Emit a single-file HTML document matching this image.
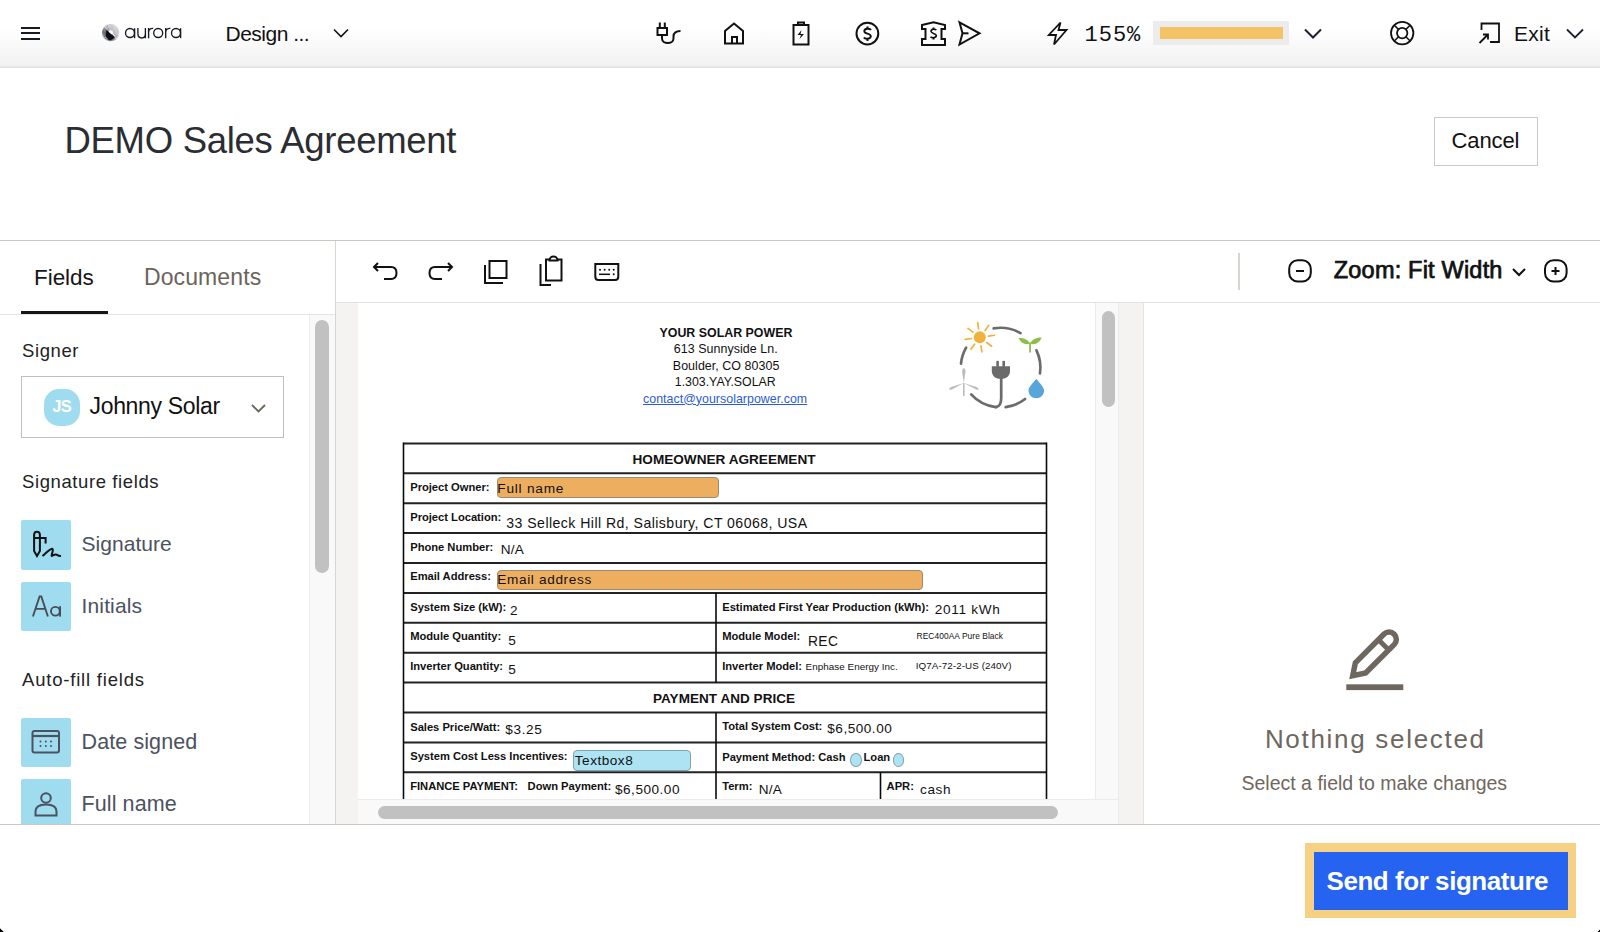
<!DOCTYPE html>
<html><head><meta charset="utf-8"><title>DEMO Sales Agreement</title>
<style>
html,body{margin:0;padding:0;}
body{width:1600px;height:932px;overflow:hidden;position:relative;background:#fff;font-family:"Liberation Sans",sans-serif;}
.t{position:absolute;white-space:nowrap;}
.r{position:absolute;}
.s{position:absolute;overflow:visible;}
</style></head><body>
<div class="r" style="left:0;top:0;width:1600px;height:66px;background:linear-gradient(#ffffff 0%,#ffffff 40%,#fbfbfb 60%,#f1f1f1 100%);"></div>
<div class="r" style="left:0px;top:66px;width:1600px;height:1px;background:#e8e9e9;"></div>
<div class="r" style="left:0px;top:67px;width:1600px;height:1px;background:#dfe1e1;"></div>
<div class="r" style="left:20.5px;top:26.6px;width:19.5px;height:2.1px;background:#161a22;"></div>
<div class="r" style="left:20.5px;top:32.4px;width:19.5px;height:2.1px;background:#161a22;"></div>
<div class="r" style="left:20.5px;top:38.3px;width:19.5px;height:2.1px;background:#161a22;"></div>
<svg class="s" width="1600" height="70" style="left:0;top:0"><g stroke-width="0.75"><line x1="113.10" y1="32.60" x2="119.20" y2="32.60" stroke="#b5b7bc"/><line x1="113.07" y1="32.96" x2="119.11" y2="33.82" stroke="#b5b7bc"/><line x1="113.00" y1="33.30" x2="118.85" y2="35.02" stroke="#b5b7bc"/><line x1="112.87" y1="33.64" x2="118.42" y2="36.17" stroke="#8a8d94"/><line x1="112.70" y1="33.95" x2="117.83" y2="37.25" stroke="#8a8d94"/><line x1="112.49" y1="34.24" x2="117.10" y2="38.23" stroke="#8a8d94"/><line x1="112.24" y1="34.49" x2="116.23" y2="39.10" stroke="#8a8d94"/><line x1="111.95" y1="34.70" x2="115.25" y2="39.83" stroke="#3a3d45"/><line x1="111.64" y1="34.87" x2="114.17" y2="40.42" stroke="#3a3d45"/><line x1="111.30" y1="35.00" x2="113.02" y2="40.85" stroke="#3a3d45"/><line x1="110.96" y1="35.07" x2="111.82" y2="41.11" stroke="#3a3d45"/><line x1="110.60" y1="35.10" x2="110.60" y2="41.20" stroke="#3a3d45"/><line x1="110.24" y1="35.07" x2="109.38" y2="41.11" stroke="#3a3d45"/><line x1="109.90" y1="35.00" x2="108.18" y2="40.85" stroke="#3a3d45"/><line x1="109.56" y1="34.87" x2="107.03" y2="40.42" stroke="#3a3d45"/><line x1="109.25" y1="34.70" x2="105.95" y2="39.83" stroke="#3a3d45"/><line x1="108.96" y1="34.49" x2="104.97" y2="39.10" stroke="#3a3d45"/><line x1="108.71" y1="34.24" x2="104.10" y2="38.23" stroke="#3a3d45"/><line x1="108.50" y1="33.95" x2="103.37" y2="37.25" stroke="#3a3d45"/><line x1="108.33" y1="33.64" x2="102.78" y2="36.17" stroke="#3a3d45"/><line x1="108.20" y1="33.30" x2="102.35" y2="35.02" stroke="#3a3d45"/><line x1="108.13" y1="32.96" x2="102.09" y2="33.82" stroke="#3a3d45"/><line x1="108.10" y1="32.60" x2="102.00" y2="32.60" stroke="#3a3d45"/><line x1="108.13" y1="32.24" x2="102.09" y2="31.38" stroke="#3a3d45"/><line x1="108.20" y1="31.90" x2="102.35" y2="30.18" stroke="#3a3d45"/><line x1="108.33" y1="31.56" x2="102.78" y2="29.03" stroke="#3a3d45"/><line x1="108.50" y1="31.25" x2="103.37" y2="27.95" stroke="#3a3d45"/><line x1="108.71" y1="30.96" x2="104.10" y2="26.97" stroke="#8a8d94"/><line x1="108.96" y1="30.71" x2="104.97" y2="26.10" stroke="#8a8d94"/><line x1="109.25" y1="30.50" x2="105.95" y2="25.37" stroke="#8a8d94"/><line x1="109.56" y1="30.33" x2="107.03" y2="24.78" stroke="#8a8d94"/><line x1="109.90" y1="30.20" x2="108.18" y2="24.35" stroke="#b5b7bc"/><line x1="110.24" y1="30.13" x2="109.38" y2="24.09" stroke="#b5b7bc"/><line x1="110.60" y1="30.10" x2="110.60" y2="24.00" stroke="#b5b7bc"/><line x1="110.96" y1="30.13" x2="111.82" y2="24.09" stroke="#b5b7bc"/><line x1="111.30" y1="30.20" x2="113.02" y2="24.35" stroke="#b5b7bc"/><line x1="111.64" y1="30.33" x2="114.17" y2="24.78" stroke="#b5b7bc"/><line x1="111.95" y1="30.50" x2="115.25" y2="25.37" stroke="#b5b7bc"/><line x1="112.24" y1="30.71" x2="116.23" y2="26.10" stroke="#b5b7bc"/><line x1="112.49" y1="30.96" x2="117.10" y2="26.97" stroke="#b5b7bc"/><line x1="112.70" y1="31.25" x2="117.83" y2="27.95" stroke="#b5b7bc"/><line x1="112.87" y1="31.56" x2="118.42" y2="29.03" stroke="#b5b7bc"/><line x1="113.00" y1="31.90" x2="118.85" y2="30.18" stroke="#b5b7bc"/><line x1="113.07" y1="32.24" x2="119.11" y2="31.38" stroke="#b5b7bc"/></g><path d="M106.5 30 L114.8 37.2 C113 39.5 110.5 40.2 108.8 40 L105.5 36 Z" fill="#0e111a"/><line x1="110" y1="30.2" x2="114.8" y2="36" stroke="#fff" stroke-width="1"/></svg>
<svg class="s" width="200" height="60" style="left:0;top:0" fill="none" stroke="#161a22" stroke-width="1.35"><circle cx="130" cy="33" r="4.5"/><line x1="134.6" y1="28.2" x2="134.6" y2="38.2"/><path d="M137.9 28 V33.5 C137.9 36.3 139.6 38 141.9 38 C144.2 38 145.4 36.3 145.4 33.5 V28 M145.4 33 V38.2"/><path d="M148.6 38.2 V28 M148.6 32.5 C148.6 29.5 150.5 28.2 153.2 28.4"/><circle cx="158.2" cy="33" r="4.5"/><path d="M165.7 38.2 V28 M165.7 32.5 C165.7 29.5 167.6 28.2 170.4 28.4"/><circle cx="176" cy="33" r="4.5"/><line x1="180.6" y1="28.2" x2="180.6" y2="38.2"/></svg>
<div class="t" style="left:225.50px;top:22.92px;font-size:21px;line-height:21px;font-weight:400;color:#111;letter-spacing:-0.5px;font-family:'Liberation Sans',sans-serif;">Design ...</div>
<svg class="s" width="1600" height="70" style="left:0;top:0" fill="none" stroke="#111" stroke-width="2"><polyline points="334,29.5 341,36.5 348,29.5" stroke-width="1.6"/><rect x="657.5" y="28" width="9.5" height="7"/><line x1="659.8" y1="22.5" x2="659.8" y2="28"/><line x1="664.8" y1="22.5" x2="664.8" y2="28"/><path d="M662 35 V38.5 C662 44.5 673.5 44.5 673.5 38.5 V36.5 C673.5 32.5 676 31 680.5 31"/><path d="M725 43.5 V31 L734 23.5 L743 31 V43.5 Z"/><path d="M732 43.5 V37 H737 V43.5"/><rect x="793.5" y="25" width="15" height="19.5"/><path d="M798 25 V22.5 H804 V25"/><path d="M801.5 30 L797.5 35 H801 L799.5 39 L804 34 H800.5 Z" fill="#111" stroke="none"/><circle cx="867.4" cy="33.6" r="10.9"/><path d="M871 30 C870 28.3 864.3 28 864.3 31.2 C864.3 34.2 870.8 33.2 870.8 36.3 C870.8 39.3 865 39.2 863.8 37.5" stroke-width="1.9"/><line x1="867.5" y1="26.5" x2="867.5" y2="29"/><line x1="867.5" y1="38.5" x2="867.5" y2="41"/><path d="M922 25 L933.5 22.3 L945 25 V29 H941.5 V39 H945 V45 H922 V39 H925.5 V29 H922 Z"/><path d="M936.3 30.2 C935.5 28.8 931 28.6 931 31.3 C931 33.8 936.3 33 936.3 35.6 C936.3 38.2 931.6 38.1 930.5 36.7" stroke-width="1.6"/><line x1="933.5" y1="27.5" x2="933.5" y2="29"/><line x1="933.5" y1="38" x2="933.5" y2="39.5"/><path d="M959.5 22.3 L979.5 33.3 L959.5 44.5 L962.5 33.3 Z" stroke-linejoin="miter"/><line x1="962.5" y1="33.3" x2="968.5" y2="33.3"/><path d="M1060.5 22.5 L1048.8 35 H1056 L1054 44.5 L1066.5 30 H1058.5 Z" stroke-width="1.8" stroke-linejoin="miter"/><polyline points="1305,29.5 1313,37.5 1321,29.5" stroke="#1c2230"/><circle cx="1402.2" cy="33.1" r="11.2" stroke-width="1.8"/><circle cx="1402.2" cy="33.1" r="5.2" stroke-width="1.8"/><path d="M1394.3 25.2 L1398.5 29.4 M1410.1 25.2 L1405.9 29.4 M1394.3 41 L1398.5 36.8 M1410.1 41 L1405.9 36.8" stroke-width="1.5"/><path d="M1481.5 30 V23.5 H1499 V42 H1490" stroke-width="1.8"/><path d="M1479.5 43 L1488 34.5 M1483 34.5 H1488 V39.5" stroke-width="1.8"/><polyline points="1567,29.5 1575,37.5 1583,29.5" stroke="#1c2230" stroke-width="1.8"/></svg>
<div class="t" style="left:1084.50px;top:24.75px;font-size:22px;line-height:22px;font-weight:400;color:#111;letter-spacing:1.0px;font-family:'Liberation Mono',monospace;">155%</div>
<div class="r" style="left:1153px;top:21px;width:136px;height:24px;background:#ececec;"></div>
<div class="r" style="left:1160px;top:27px;width:123px;height:12px;background:#f3c366;"></div>
<div class="t" style="left:1514.00px;top:23.12px;font-size:21px;line-height:21px;font-weight:400;color:#111;letter-spacing:0.25px;font-family:'Liberation Sans',sans-serif;">Exit</div>
<div class="t" style="left:64.50px;top:122.85px;font-size:36.5px;line-height:36.5px;font-weight:400;color:#2a2d32;letter-spacing:-0.3px;font-family:'Liberation Sans',sans-serif;">DEMO Sales Agreement</div>
<div class="r" style="left:1434px;top:117px;width:102px;height:47px;border:1px solid #c9cccf;background:#fff"></div>
<div class="t" style="left:1451.50px;top:129.98px;font-size:22px;line-height:22px;font-weight:400;color:#111;letter-spacing:-0.1px;font-family:'Liberation Sans',sans-serif;">Cancel</div>
<div class="r" style="left:0px;top:240px;width:1600px;height:1px;background:#cdc8c2;"></div>
<div class="r" style="left:335px;top:241px;width:1px;height:583px;background:#d9d6d2;"></div>
<div class="t" style="left:34.00px;top:266.75px;font-size:22.5px;line-height:22.5px;font-weight:400;color:#161616;letter-spacing:-0.05px;font-family:'Liberation Sans',sans-serif;">Fields</div>
<div class="t" style="left:144.00px;top:266.13px;font-size:23px;line-height:23px;font-weight:400;color:#6b645c;letter-spacing:0.1px;font-family:'Liberation Sans',sans-serif;">Documents</div>
<div class="r" style="left:0px;top:314px;width:335px;height:1px;background:#e6e4e1;"></div>
<div class="r" style="left:21px;top:311px;width:87px;height:3px;background:#161616;"></div>
<div class="r" style="left:309px;top:315px;width:26px;height:509px;background:#f9f9f9;border-left:1px solid #ebebeb;box-sizing:border-box"></div>
<div class="r" style="left:315px;top:320px;width:14px;height:253px;background:#c1c1c1;border-radius:7px"></div>
<div class="t" style="left:22.00px;top:342.09px;font-size:18.5px;line-height:18.5px;font-weight:400;color:#222;letter-spacing:0.6px;font-family:'Liberation Sans',sans-serif;">Signer</div>
<div class="r" style="left:21px;top:376px;width:263px;height:62px;border:1px solid #bcc0c4;box-sizing:border-box;background:#fff"></div>
<div class="r" style="left:44px;top:389px;width:36px;height:37px;background:#9fdcef;border-radius:15px"></div>
<div class="t" style="left:52.30px;top:398.33px;font-size:16.5px;line-height:16.5px;font-weight:700;color:#fff;letter-spacing:-0.7px;font-family:'Liberation Sans',sans-serif;">JS</div>
<div class="t" style="left:89.50px;top:395.13px;font-size:23px;line-height:23px;font-weight:400;color:#111;letter-spacing:-0.32px;font-family:'Liberation Sans',sans-serif;">Johnny Solar</div>
<svg class="s" width="300" height="450" style="left:0;top:0" fill="none"><polyline points="252,405 258.5,411.5 265,405" stroke="#6b645b" stroke-width="1.8"/></svg>
<div class="t" style="left:22.00px;top:473.04px;font-size:18.5px;line-height:18.5px;font-weight:400;color:#222;letter-spacing:0.6px;font-family:'Liberation Sans',sans-serif;">Signature fields</div>
<div class="r" style="left:21px;top:520px;width:50px;height:50px;background:#9fdcef;border-radius:2px"></div>
<div class="t" style="left:81.50px;top:533.32px;font-size:21px;line-height:21px;font-weight:400;color:#4b5260;letter-spacing:0.05px;font-family:'Liberation Sans',sans-serif;">Signature</div>
<div class="r" style="left:21px;top:582px;width:50px;height:49px;background:#9fdcef;border-radius:2px"></div>
<div class="t" style="left:81.50px;top:594.92px;font-size:21px;line-height:21px;font-weight:400;color:#4b5260;letter-spacing:0.15px;font-family:'Liberation Sans',sans-serif;">Initials</div>
<div class="t" style="left:22.00px;top:670.84px;font-size:18.5px;line-height:18.5px;font-weight:400;color:#222;letter-spacing:0.8px;font-family:'Liberation Sans',sans-serif;">Auto-fill fields</div>
<div class="r" style="left:21px;top:717.5px;width:50px;height:49.5px;background:#9fdcef;border-radius:2px"></div>
<div class="t" style="left:81.50px;top:731.60px;font-size:21.5px;line-height:21.5px;font-weight:400;color:#4b5260;letter-spacing:0.1px;font-family:'Liberation Sans',sans-serif;">Date signed</div>
<div class="r" style="left:21px;top:779px;width:50px;height:45px;background:#9fdcef;border-radius:2px 2px 0 0"></div>
<div class="t" style="left:81.50px;top:793.60px;font-size:21.5px;line-height:21.5px;font-weight:400;color:#4b5260;letter-spacing:0.1px;font-family:'Liberation Sans',sans-serif;">Full name</div>
<svg class="s" width="340" height="830" style="left:0;top:0" fill="none" stroke="#111" stroke-width="1.8"><path d="M34.1 551 V535 C34.1 530.6 39.9 530.6 39.9 535 V551 L37 556 Z" stroke-width="2"/><path d="M34.1 538 H45.6 V543.6" stroke-width="2"/><path d="M42.5 556 C46 553 50 549 52 548.8 C53.8 548.8 52 553.5 51.6 555.5 C51.4 557 54.5 553.5 56.5 554.6 C58 555.6 59 556 61 556" stroke-width="2"/><rect x="32.5" y="731" width="26.5" height="21.5" rx="2" stroke="#4b5260" stroke-width="2"/><line x1="32.5" y1="736" x2="59" y2="736" stroke="#4b5260" stroke-width="2.2"/><g fill="#4b5260" stroke="none"><circle cx="40.5" cy="741.5" r="1"/><circle cx="45.8" cy="741.5" r="1"/><circle cx="51" cy="741.5" r="1"/><circle cx="40.5" cy="746" r="1"/><circle cx="45.8" cy="746" r="1"/><circle cx="51" cy="746" r="1"/></g><circle cx="46" cy="798" r="4.8" stroke="#4b5260" stroke-width="2"/><path d="M35.5 815.5 V811.5 C35.5 806.5 39.5 804.5 46 804.5 C52.5 804.5 56.5 806.5 56.5 811.5 V815.5 Z" stroke="#4b5260" stroke-width="2"/></svg>
<svg class="s" width="100" height="640" style="left:0;top:0" fill="none" stroke="#474b54" stroke-width="1.85"><path d="M32.9 616.5 L39.6 596.4 H41.3 L47.9 616.5 M35.4 608.9 H45.4"/><circle cx="55.4" cy="611.3" r="4.4"/><line x1="60.1" y1="606.2" x2="60.1" y2="616.6"/></svg>
<div class="r" style="left:336px;top:302px;width:1264px;height:1px;background:#e3e3e3;"></div>
<div class="r" style="left:1238px;top:253px;width:1.5px;height:37px;background:#d8d5d1;"></div>
<svg class="s" width="1600" height="300" style="left:0;top:0" fill="none" stroke="#111" stroke-width="2"><path d="M374 267 H391 C394.5 267 396.5 269.5 396.5 273 C396.5 276.5 394.5 279 391 279 H384"/><polyline points="378,263 374,267 378,271"/><path d="M452 267 H435 C431.5 267 429.5 269.5 429.5 273 C429.5 276.5 431.5 279 435 279 H442"/><polyline points="448,263 452,267 448,271"/><rect x="489.5" y="261" width="17" height="17" /><polyline points="485,265 485,283 503,283"/><rect x="546" y="259.5" width="15.5" height="21"/><path d="M549.5 260.5 C549.5 255 557.5 255 557.5 260.5 Z" fill="#fff"/><polyline points="540.5,264 540.5,285 551,285"/><path d="M595.3 264 H618.3 V276.5 C618.3 278.5 617 280 615 280 H598.5 C596.5 280 595.3 278.5 595.3 276.5 Z"/><g fill="#111" stroke="none"><circle cx="600" cy="269.8" r="1"/><circle cx="604.6" cy="269.8" r="1"/><circle cx="609.2" cy="269.8" r="1"/><circle cx="613.7" cy="269.8" r="1"/><circle cx="613.7" cy="274.3" r="1"/></g><line x1="599" y1="274.3" x2="610" y2="274.3" stroke-width="1.5"/><rect x="1289.2" y="260.2" width="21.6" height="21.3" rx="8.5"/><line x1="1296" y1="271" x2="1304" y2="271"/><polyline points="1513,269 1519,275 1525,269"/><rect x="1545" y="260.2" width="21.6" height="21.3" rx="8.5"/><path d="M1551.5 271 H1559.5 M1555.5 267 V275"/></svg>
<div class="t" style="left:1333.80px;top:259.41px;font-size:23.5px;line-height:23.5px;font-weight:400;color:#111;letter-spacing:0.2px;font-family:'Liberation Sans',sans-serif;-webkit-text-stroke:0.75px #111">Zoom: Fit Width</div>
<div class="r" style="left:336px;top:303px;width:808px;height:521px;background:#f4f3f1;"></div>
<div class="r" style="left:358px;top:303px;width:737px;height:496px;background:#ffffff;"></div>
<div class="r" style="left:1095px;top:303px;width:24px;height:496px;background:#f9f9f9;border-left:1px solid #ececec;border-right:1px solid #ececec;box-sizing:border-box"></div>
<div class="r" style="left:1102px;top:311px;width:13px;height:95.5px;background:#c1c1c1;border-radius:6.5px"></div>
<div class="r" style="left:358px;top:799px;width:761px;height:25px;background:#f9f9f9;border-top:1px solid #ececec;border-right:1px solid #ececec;box-sizing:border-box"></div>
<div class="r" style="left:378px;top:806px;width:680px;height:13px;background:#c1c1c1;border-radius:6.5px"></div>
<div class="r" style="left:1143px;top:303px;width:1px;height:521px;background:#e7e5e2;"></div>
<div class="r" style="left:1144px;top:303px;width:456px;height:521px;background:#ffffff;"></div>
<div class="t" style="left:659.50px;top:326.75px;font-size:12.4px;line-height:12.4px;font-weight:700;color:#111;letter-spacing:0px;font-family:'Liberation Sans',sans-serif;">YOUR SOLAR POWER</div><div class="t" style="left:673.80px;top:343.06px;font-size:12.45px;line-height:12.45px;font-weight:400;color:#111;letter-spacing:0.05px;font-family:'Liberation Sans',sans-serif;">613 Sunnyside Ln.</div><div class="t" style="left:672.80px;top:359.96px;font-size:12.45px;line-height:12.45px;font-weight:400;color:#111;letter-spacing:0.05px;font-family:'Liberation Sans',sans-serif;">Boulder, CO 80305</div><div class="t" style="left:674.80px;top:375.55px;font-size:12.35px;line-height:12.35px;font-weight:400;color:#111;letter-spacing:0px;font-family:'Liberation Sans',sans-serif;">1.303.YAY.SOLAR</div><div class="t" style="left:643.00px;top:392.60px;font-size:12.4px;line-height:12.4px;font-weight:400;color:#2b5bd6;letter-spacing:0.03px;font-family:'Liberation Sans',sans-serif;text-decoration:underline">contact@yoursolarpower.com</div><svg class="s" width="1100" height="800" style="left:0;top:0" stroke="#222" stroke-width="2" fill="none"><line x1="403.5" y1="443.40" x2="1046.5" y2="443.40"/><line x1="403.5" y1="473.30" x2="1046.5" y2="473.30"/><line x1="403.5" y1="503.20" x2="1046.5" y2="503.20"/><line x1="403.5" y1="533.10" x2="1046.5" y2="533.10"/><line x1="403.5" y1="563.00" x2="1046.5" y2="563.00"/><line x1="403.5" y1="592.90" x2="1046.5" y2="592.90"/><line x1="403.5" y1="622.80" x2="1046.5" y2="622.80"/><line x1="403.5" y1="652.70" x2="1046.5" y2="652.70"/><line x1="403.5" y1="682.60" x2="1046.5" y2="682.60"/><line x1="403.5" y1="712.50" x2="1046.5" y2="712.50"/><line x1="403.5" y1="742.40" x2="1046.5" y2="742.40"/><line x1="403.5" y1="772.30" x2="1046.5" y2="772.30"/><g stroke="#0a0a0a" stroke-width="1.6"><line x1="403.5" y1="442.5" x2="403.5" y2="799"/><line x1="1046.5" y1="442.5" x2="1046.5" y2="799"/><line x1="716" y1="592.90" x2="716" y2="682.60"/><line x1="716" y1="712.50" x2="716" y2="799"/><line x1="880.5" y1="772.30" x2="880.5" y2="799"/></g></svg><div class="t" style="left:632.50px;top:452.59px;font-size:13.6px;line-height:13.6px;font-weight:700;color:#111;letter-spacing:0px;font-family:'Liberation Sans',sans-serif;">HOMEOWNER AGREEMENT</div><div class="r" style="left:496.5px;top:477px;width:222px;height:20.5px;background:#eeae60;border:1px solid #9c8a70;border-radius:4px;box-sizing:border-box"></div><div class="r" style="left:496.5px;top:570px;width:426px;height:19.5px;background:#eeae60;border:1px solid #9c8a70;border-radius:4px;box-sizing:border-box"></div><div class="t" style="left:410.20px;top:481.82px;font-size:11.2px;line-height:11.2px;font-weight:700;color:#111;letter-spacing:-0.02px;font-family:'Liberation Sans',sans-serif;">Project Owner:</div><div class="t" style="left:497.30px;top:481.60px;font-size:13.7px;line-height:13.7px;font-weight:400;color:#111;letter-spacing:0.75px;font-family:'Liberation Sans',sans-serif;">Full name</div><div class="t" style="left:410.20px;top:511.82px;font-size:11.2px;line-height:11.2px;font-weight:700;color:#111;letter-spacing:-0.02px;font-family:'Liberation Sans',sans-serif;">Project Location:</div><div class="t" style="left:506.30px;top:515.76px;font-size:14.1px;line-height:14.1px;font-weight:400;color:#111;letter-spacing:0.45px;font-family:'Liberation Sans',sans-serif;">33 Selleck Hill Rd, Salisbury, CT 06068, USA</div><div class="t" style="left:410.20px;top:541.82px;font-size:11.2px;line-height:11.2px;font-weight:700;color:#111;letter-spacing:-0.02px;font-family:'Liberation Sans',sans-serif;">Phone Number:</div><div class="t" style="left:500.80px;top:543.24px;font-size:13.6px;line-height:13.6px;font-weight:400;color:#111;letter-spacing:0.2px;font-family:'Liberation Sans',sans-serif;">N/A</div><div class="t" style="left:410.20px;top:571.42px;font-size:11.2px;line-height:11.2px;font-weight:700;color:#111;letter-spacing:-0.02px;font-family:'Liberation Sans',sans-serif;">Email Address:</div><div class="t" style="left:497.30px;top:573.49px;font-size:13.6px;line-height:13.6px;font-weight:400;color:#111;letter-spacing:0.65px;font-family:'Liberation Sans',sans-serif;">Email address</div><div class="t" style="left:410.20px;top:601.72px;font-size:11.2px;line-height:11.2px;font-weight:700;color:#111;letter-spacing:-0.02px;font-family:'Liberation Sans',sans-serif;">System Size (kW):</div><div class="t" style="left:510.00px;top:603.89px;font-size:13.6px;line-height:13.6px;font-weight:400;color:#111;letter-spacing:0.6px;font-family:'Liberation Sans',sans-serif;">2</div><div class="t" style="left:722.20px;top:601.72px;font-size:11.2px;line-height:11.2px;font-weight:700;color:#111;letter-spacing:-0.02px;font-family:'Liberation Sans',sans-serif;">Estimated First Year Production (kWh):</div><div class="t" style="left:934.80px;top:603.39px;font-size:13.6px;line-height:13.6px;font-weight:400;color:#111;letter-spacing:0.7px;font-family:'Liberation Sans',sans-serif;">2011 kWh</div><div class="t" style="left:410.20px;top:631.32px;font-size:11.2px;line-height:11.2px;font-weight:700;color:#111;letter-spacing:-0.02px;font-family:'Liberation Sans',sans-serif;">Module Quantity:</div><div class="t" style="left:508.30px;top:634.09px;font-size:13.6px;line-height:13.6px;font-weight:400;color:#111;letter-spacing:0.6px;font-family:'Liberation Sans',sans-serif;">5</div><div class="t" style="left:722.20px;top:631.27px;font-size:11.2px;line-height:11.2px;font-weight:700;color:#111;letter-spacing:-0.02px;font-family:'Liberation Sans',sans-serif;">Module Model:</div><div class="t" style="left:808.00px;top:635.32px;font-size:13.8px;line-height:13.8px;font-weight:400;color:#111;letter-spacing:0.4px;font-family:'Liberation Sans',sans-serif;">REC</div><div class="t" style="left:916.60px;top:632.39px;font-size:8.4px;line-height:8.4px;font-weight:400;color:#111;letter-spacing:0.07px;font-family:'Liberation Sans',sans-serif;">REC400AA Pure Black</div><div class="t" style="left:410.20px;top:661.22px;font-size:11.2px;line-height:11.2px;font-weight:700;color:#111;letter-spacing:-0.02px;font-family:'Liberation Sans',sans-serif;">Inverter Quantity:</div><div class="t" style="left:508.30px;top:663.29px;font-size:13.6px;line-height:13.6px;font-weight:400;color:#111;letter-spacing:0.6px;font-family:'Liberation Sans',sans-serif;">5</div><div class="t" style="left:722.20px;top:661.12px;font-size:11.2px;line-height:11.2px;font-weight:700;color:#111;letter-spacing:-0.02px;font-family:'Liberation Sans',sans-serif;">Inverter Model:</div><div class="t" style="left:805.60px;top:662.42px;font-size:9.9px;line-height:9.9px;font-weight:400;color:#111;letter-spacing:0.03px;font-family:'Liberation Sans',sans-serif;">Enphase Energy Inc.</div><div class="t" style="left:915.80px;top:660.60px;font-size:9.8px;line-height:9.8px;font-weight:400;color:#111;letter-spacing:0.08px;font-family:'Liberation Sans',sans-serif;">IQ7A-72-2-US (240V)</div><div class="t" style="left:653.00px;top:691.67px;font-size:13.5px;line-height:13.5px;font-weight:700;color:#111;letter-spacing:0.05px;font-family:'Liberation Sans',sans-serif;">PAYMENT AND PRICE</div><div class="t" style="left:410.20px;top:721.52px;font-size:11.2px;line-height:11.2px;font-weight:700;color:#111;letter-spacing:-0.02px;font-family:'Liberation Sans',sans-serif;">Sales Price/Watt:</div><div class="t" style="left:505.30px;top:722.89px;font-size:13.6px;line-height:13.6px;font-weight:400;color:#111;letter-spacing:0.64px;font-family:'Liberation Sans',sans-serif;">$3.25</div><div class="t" style="left:722.20px;top:721.42px;font-size:11.2px;line-height:11.2px;font-weight:700;color:#111;letter-spacing:-0.02px;font-family:'Liberation Sans',sans-serif;">Total System Cost:</div><div class="t" style="left:827.30px;top:721.89px;font-size:13.6px;line-height:13.6px;font-weight:400;color:#111;letter-spacing:0.5px;font-family:'Liberation Sans',sans-serif;">$6,500.00</div><div class="r" style="left:572.5px;top:750px;width:118.5px;height:21px;background:#ade3f2;border:1px solid #7fa3b0;border-radius:4px;box-sizing:border-box"></div><div class="t" style="left:410.20px;top:751.22px;font-size:11.2px;line-height:11.2px;font-weight:700;color:#111;letter-spacing:-0.02px;font-family:'Liberation Sans',sans-serif;">System Cost Less Incentives:</div><div class="t" style="left:574.80px;top:754.49px;font-size:13.6px;line-height:13.6px;font-weight:400;color:#111;letter-spacing:0.5px;font-family:'Liberation Sans',sans-serif;">Textbox8</div><div class="t" style="left:722.20px;top:751.52px;font-size:11.2px;line-height:11.2px;font-weight:700;color:#111;letter-spacing:-0.02px;font-family:'Liberation Sans',sans-serif;">Payment Method: Cash</div><div class="t" style="left:863.50px;top:751.52px;font-size:11.2px;line-height:11.2px;font-weight:700;color:#111;letter-spacing:-0.02px;font-family:'Liberation Sans',sans-serif;">Loan</div><div class="r" style="left:850px;top:753px;width:11.5px;height:13.5px;background:#ade3f2;border:1px solid #7fa3b0;border-radius:50%;box-sizing:border-box"></div><div class="r" style="left:892.5px;top:753px;width:11.5px;height:13.5px;background:#ade3f2;border:1px solid #7fa3b0;border-radius:50%;box-sizing:border-box"></div><div class="t" style="left:410.20px;top:781.22px;font-size:11.2px;line-height:11.2px;font-weight:700;color:#111;letter-spacing:-0.02px;font-family:'Liberation Sans',sans-serif;">FINANCE PAYMENT:</div><div class="t" style="left:527.60px;top:781.22px;font-size:11.2px;line-height:11.2px;font-weight:700;color:#111;letter-spacing:-0.02px;font-family:'Liberation Sans',sans-serif;">Down Payment:</div><div class="t" style="left:615.00px;top:782.89px;font-size:13.6px;line-height:13.6px;font-weight:400;color:#111;letter-spacing:0.5px;font-family:'Liberation Sans',sans-serif;">$6,500.00</div><div class="t" style="left:722.20px;top:781.12px;font-size:11.2px;line-height:11.2px;font-weight:700;color:#111;letter-spacing:-0.02px;font-family:'Liberation Sans',sans-serif;">Term:</div><div class="t" style="left:758.80px;top:783.49px;font-size:13.6px;line-height:13.6px;font-weight:400;color:#111;letter-spacing:0.2px;font-family:'Liberation Sans',sans-serif;">N/A</div><div class="t" style="left:886.60px;top:781.12px;font-size:11.2px;line-height:11.2px;font-weight:700;color:#111;letter-spacing:-0.02px;font-family:'Liberation Sans',sans-serif;">APR:</div><div class="t" style="left:920.00px;top:783.49px;font-size:13.6px;line-height:13.6px;font-weight:400;color:#111;letter-spacing:0.6px;font-family:'Liberation Sans',sans-serif;">cash</div><svg class="s" width="1100" height="420" style="left:0;top:0" fill="none"><g stroke="#6b6b6b" stroke-width="2.7" stroke-linecap="round"><path d="M993.69 328.40 A39.8 39.8 0 0 1 1020.50 333.13"/><path d="M1036.46 350.34 A39.8 39.8 0 0 1 1039.96 373.48"/><path d="M1025.10 398.96 A39.8 39.8 0 0 1 1005.66 407.08"/><path d="M960.99 363.72 A39.8 39.8 0 0 1 966.13 347.70"/><path d="M971.16 394.39 A39.8 39.8 0 0 0 995.75 407.10"/></g><path d="M996 407.2 C1000 406.5 1001.2 403 1001.2 398 V377" stroke="#6b6b6b" stroke-width="2.7" stroke-linecap="round"/><path d="M991.8 366.3 H1010 V371 C1010 376 1006 379 1000.9 379 C995.8 379 991.8 376 991.8 371 Z" fill="#6b6b6b"/><rect x="996.3" y="360.9" width="2.6" height="6" fill="#6b6b6b"/><rect x="1002.4" y="360.9" width="2.6" height="6" fill="#6b6b6b"/><circle cx="979.8" cy="337.3" r="6" fill="#efb23f"/><g stroke="#efb23f" stroke-width="1.7" stroke-linecap="round"><line x1="988.32" y1="336.10" x2="994.46" y2="335.24"/><line x1="986.67" y1="342.48" x2="991.62" y2="346.21"/><line x1="981.00" y1="345.82" x2="981.86" y2="351.96"/><line x1="974.62" y1="344.17" x2="970.89" y2="349.12"/><line x1="971.28" y1="338.50" x2="965.14" y2="339.36"/><line x1="972.93" y1="332.12" x2="967.98" y2="328.39"/><line x1="978.60" y1="328.78" x2="977.74" y2="322.64"/><line x1="984.98" y1="330.43" x2="988.71" y2="325.48"/></g><path d="M1030.1 352.6 V342.5" stroke="#8bbf47" stroke-width="1.8"/><path d="M1030.1 343.5 C1027.5 338.5 1022 337.5 1018.6 338 C1020.5 342.5 1025 345.5 1030.1 343.5 Z" fill="#8bbf47"/><path d="M1030.1 343.5 C1032.7 338.5 1038 337.3 1041.6 337.5 C1039.7 342.5 1035.2 345.5 1030.1 343.5 Z" fill="#8bbf47"/><path d="M1036.3 378.8 C1032.5 383.5 1028.5 387.5 1028.5 390.5 C1028.5 395 1032 398.2 1036.3 398.2 C1040.6 398.2 1044.1 395 1044.1 390.5 C1044.1 387.5 1040.1 383.5 1036.3 378.8 Z" fill="#58a5da"/><g fill="#bdbdbd"><path d="M963.8 383.1 L962 371.5 C962.5 367 965.1 367 965.6 371.5 Z"/><path d="M963.8 383.1 L952 389.5 C948.5 390.5 948.3 388.5 951 387 Z"/><path d="M963.8 383.1 L976 389.5 C979.5 390.5 979.3 388.5 976.6 387 Z"/></g><line x1="963.8" y1="383" x2="963.8" y2="396" stroke="#bdbdbd" stroke-width="1.6"/></svg>
<svg class="s" width="1600" height="700" style="left:0;top:0" fill="none"><rect x="1346.3" y="684.3" width="57" height="5.8" fill="#6e6760"/><path d="M1352.72 675.68 L1355.37 662.77 L1384.08 634.07 A7.25 7.25 0 0 1 1394.33 644.32 L1365.63 673.03 Z" stroke="#6e6760" stroke-width="5.5" stroke-linejoin="miter" stroke-miterlimit="10"/><path d="M1378.50 639.65 L1388.75 649.90" stroke="#6e6760" stroke-width="5"/></svg>
<div class="t" style="left:1264.90px;top:725.79px;font-size:26px;line-height:26px;font-weight:400;color:#6e6760;letter-spacing:1.7px;font-family:'Liberation Sans',sans-serif;">Nothing selected</div>
<div class="t" style="left:1241.50px;top:773.79px;font-size:19.5px;line-height:19.5px;font-weight:400;color:#6e6760;letter-spacing:0px;font-family:'Liberation Sans',sans-serif;">Select a field to make changes</div>
<svg class="s" width="1600" height="932" style="left:0;top:0"><path d="M0 928.3 L3.8 932 H0 Z" fill="#000"/><path d="M1600 929.5 L1597.5 932 H1600 Z" fill="#000"/></svg>
<div class="r" style="left:0px;top:824px;width:1600px;height:1px;background:#cdc8c2;"></div>
<div class="r" style="left:1305px;top:843px;width:271px;height:75px;background:#f6d184;"></div>
<div class="r" style="left:1313.5px;top:851.5px;width:254px;height:58.5px;background:#2563f0;"></div>
<div class="t" style="left:1326.50px;top:867.99px;font-size:26px;line-height:26px;font-weight:700;color:#ffffff;letter-spacing:-0.45px;font-family:'Liberation Sans',sans-serif;">Send for signature</div>
</body></html>
